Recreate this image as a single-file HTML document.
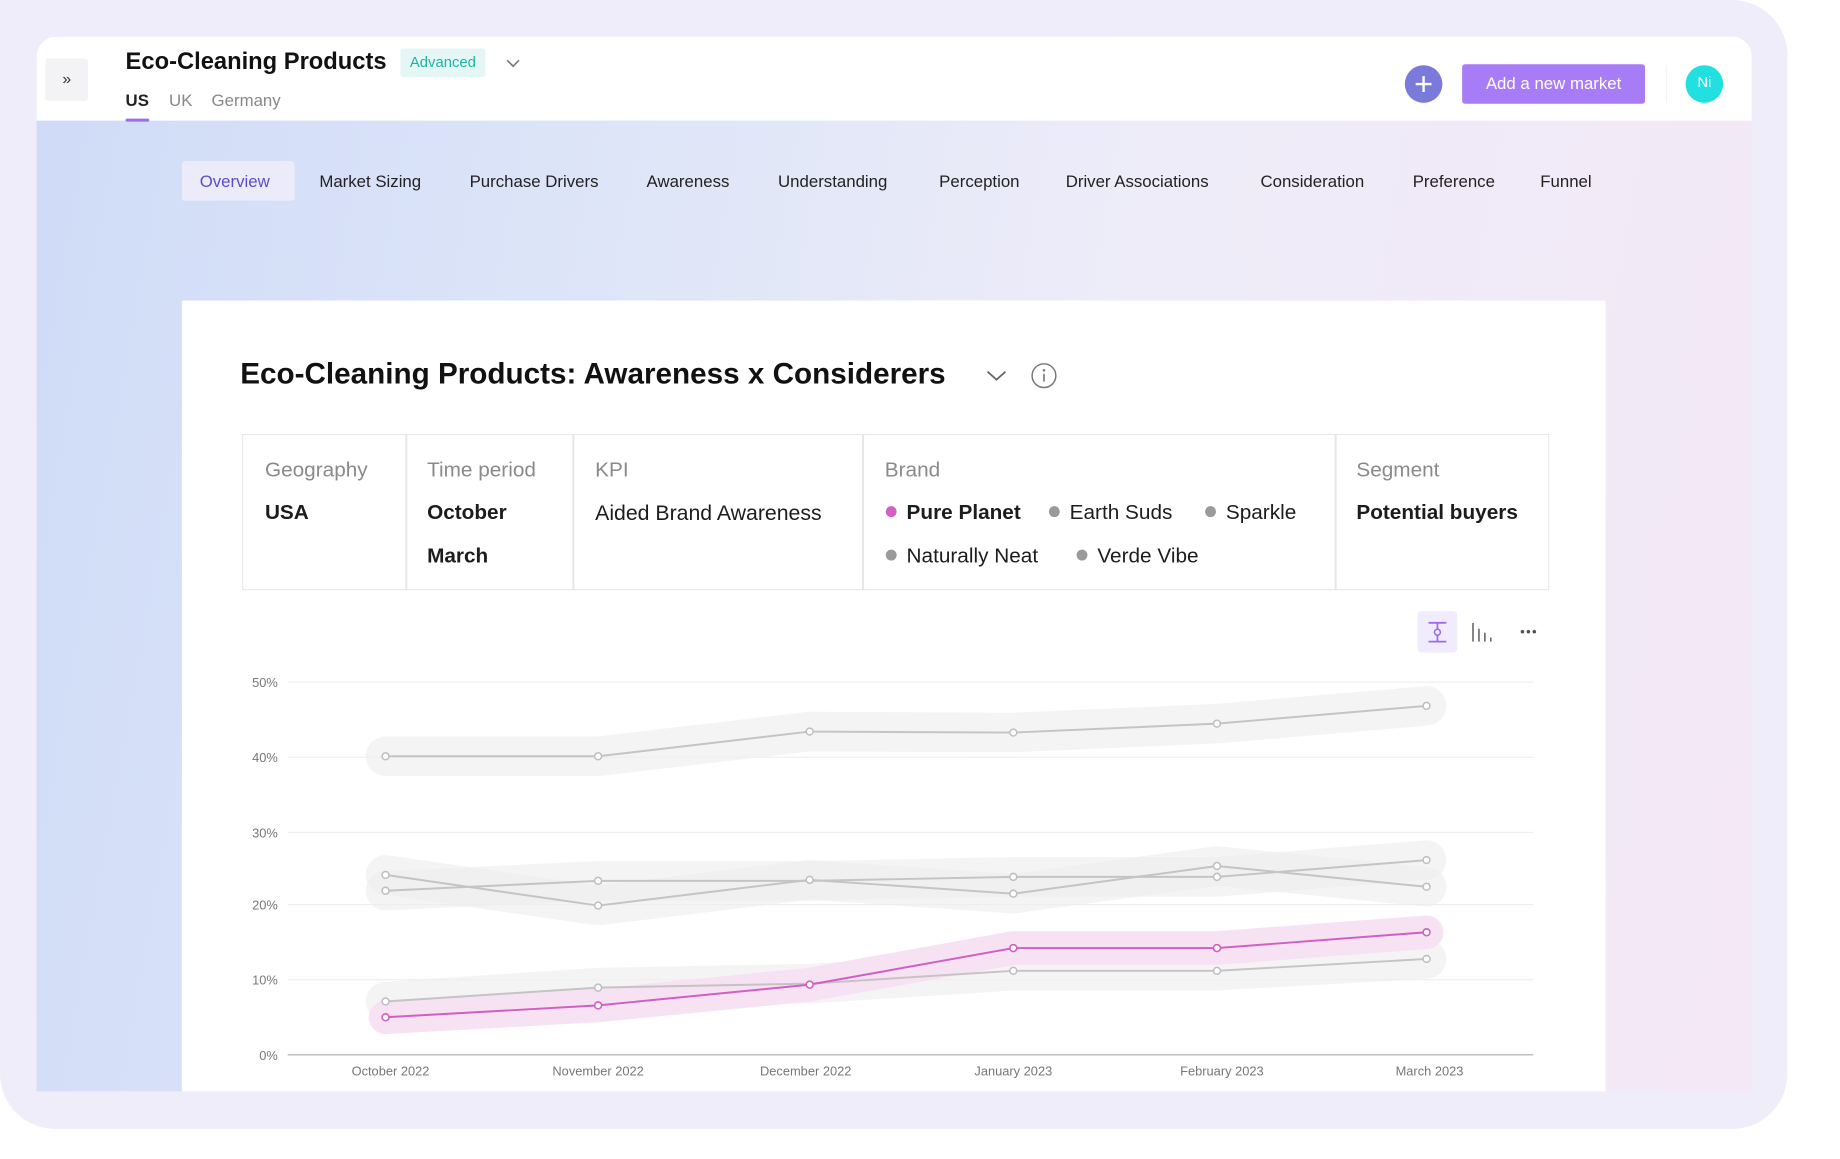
<!DOCTYPE html>
<html><head><meta charset="utf-8"><style>
*{margin:0;padding:0;box-sizing:border-box}
body{width:1840px;height:1158px;background:#fff;font-family:"Liberation Sans",sans-serif;position:relative;overflow:hidden;color:#1c1c1c}
#wrap{position:absolute;left:0;top:0;width:1862px;height:1172px;transform:scale(0.9886);transform-origin:0 0}
.abs{position:absolute}
#frame{left:0;top:0;width:1808px;height:1142px;background:#eeedf9;border-radius:0 56px 56px 56px}
#panel{left:37px;top:37px;width:1735px;height:1067px;border-radius:20px 20px 0 0;overflow:hidden;background:linear-gradient(100deg,#cfdbf7 0%,#dfe6f8 35%,#eeecf9 60%,#f4e8f6 100%)}
#hdr{left:0;top:0;width:1735px;height:85px;background:#fff}
.t{position:absolute;white-space:nowrap}
.nav{font-size:17px;color:#222;top:137px}
.lab{font-size:21px;color:#8a8a8a;top:464px}
.val{font-size:21px;color:#1c1c1c;top:507px}
.dot{display:inline-block;width:11px;height:11px;border-radius:50%;background:#9a9a9a;margin-right:10px;vertical-align:2px}
</style></head><body><div id="wrap">
<div id="frame" class="abs"></div>
<div id="panel" class="abs">
 <div id="hdr" class="abs"></div>
</div>
<div class="abs" style="left:46px;top:59px;width:43px;height:43px;background:#f3f3f5;border-radius:3px;font-size:16px;text-align:center;line-height:43px;color:#333">»</div>
<div class="t" style="left:127px;top:49px;font-size:24px;font-weight:bold;color:#111">Eco-Cleaning Products</div>
<div class="abs" style="left:405px;top:49px;width:86px;height:29px;background:#e5f7f5;border-radius:3px;color:#1db3a3;font-size:15px;text-align:center;line-height:29px">Advanced</div>
<svg class="abs" style="left:510px;top:57px" width="18" height="14"><path d="M3 4 L9 10 L15 4" fill="none" stroke="#777" stroke-width="1.6"/></svg>
<div class="t" style="left:127px;top:92px;font-size:17px;font-weight:bold;color:#222">US</div>
<div class="t" style="left:171px;top:92px;font-size:17px;color:#888">UK</div>
<div class="t" style="left:214px;top:92px;font-size:17px;color:#888">Germany</div>
<div class="abs" style="left:127px;top:120px;width:24px;height:3px;background:#9a6ee6;border-radius:2px"></div>
<div class="abs" style="left:1421px;top:66px;width:38px;height:38px;border-radius:50%;background:#7a7adb"></div>
<svg class="abs" style="left:1421px;top:66px" width="38" height="38"><path d="M19 11V27M11 19H27" stroke="#fff" stroke-width="2.4"/></svg>
<div class="abs" style="left:1479px;top:65px;width:185px;height:40px;background:#a77cf6;border-radius:3px;color:#fff;font-size:17px;text-align:center;line-height:40px">Add a new market</div>
<div class="abs" style="left:1685px;top:66px;width:1px;height:38px;background:#eee"></div>
<div class="abs" style="left:1705px;top:66px;width:38px;height:38px;border-radius:50%;background:#22dfe0;color:#fff;font-size:15px;text-align:center;line-height:36px">Ni</div>
<div class="abs" style="left:184px;top:163px;width:114px;height:40px;background:#ecebfa;border-radius:3px"></div>
<div class="t nav" style="left:202px;top:174px;color:#5a4ec6">Overview</div>
<div class="t nav" style="left:323px;top:174px">Market Sizing</div>
<div class="t nav" style="left:475px;top:174px">Purchase Drivers</div>
<div class="t nav" style="left:654px;top:174px">Awareness</div>
<div class="t nav" style="left:787px;top:174px">Understanding</div>
<div class="t nav" style="left:950px;top:174px">Perception</div>
<div class="t nav" style="left:1078px;top:174px">Driver Associations</div>
<div class="t nav" style="left:1275px;top:174px">Consideration</div>
<div class="t nav" style="left:1429px;top:174px">Preference</div>
<div class="t nav" style="left:1558px;top:174px">Funnel</div>
<div class="abs" style="left:184px;top:304px;width:1440px;height:800px;background:#fff"></div>
<div class="t" style="left:243px;top:362px;font-size:30px;font-weight:bold;color:#111">Eco-Cleaning Products: Awareness x Considerers</div>
<svg class="abs" style="left:996px;top:372px" width="24" height="16"><path d="M3 4 L12 12 L21 4" fill="none" stroke="#666" stroke-width="1.8"/></svg>
<svg class="abs" style="left:1042px;top:366px" width="28" height="28"><circle cx="14" cy="14" r="12" fill="none" stroke="#777" stroke-width="1.5"/><circle cx="14" cy="8.5" r="1.3" fill="#777"/><path d="M14 12V20" stroke="#777" stroke-width="1.6"/></svg>
<div class="abs" style="left:245px;top:439px;width:1322px;height:158px;border:1.5px solid #e6e6e6"></div>
<div class="abs" style="left:410px;top:439px;width:1.5px;height:158px;background:#e6e6e6"></div>
<div class="abs" style="left:579px;top:439px;width:1.5px;height:158px;background:#e6e6e6"></div>
<div class="abs" style="left:872px;top:439px;width:1.5px;height:158px;background:#e6e6e6"></div>
<div class="abs" style="left:1350px;top:439px;width:1.5px;height:158px;background:#e6e6e6"></div>
<div class="t lab" style="left:268px">Geography</div>
<div class="t lab" style="left:432px">Time period</div>
<div class="t lab" style="left:602px">KPI</div>
<div class="t lab" style="left:895px">Brand</div>
<div class="t lab" style="left:1372px">Segment</div>
<div class="t val" style="left:268px;font-weight:bold">USA</div>
<div class="t val" style="left:432px;font-weight:bold">October</div>
<div class="t val" style="left:432px;top:551px;font-weight:bold">March</div>
<div class="t val" style="left:602px;font-size:21.5px">Aided Brand Awareness</div>
<div class="t val" style="left:896px"><span class="dot" style="background:#d45fc3"></span><b>Pure Planet</b></div>
<div class="t val" style="left:1061px"><span class="dot"></span>Earth Suds</div>
<div class="t val" style="left:1219px"><span class="dot"></span>Sparkle</div>
<div class="t val" style="left:896px;top:551px"><span class="dot"></span>Naturally Neat</div>
<div class="t val" style="left:1089px;top:551px"><span class="dot"></span>Verde Vibe</div>
<div class="t val" style="left:1372px;font-weight:bold">Potential buyers</div>
<div class="abs" style="left:1434px;top:618px;width:40px;height:42px;background:#f1ecfd;border-radius:4px"></div>
<svg class="abs" style="left:1434px;top:618px" width="150" height="42">
<path d="M11 12H29M11 31H29M20 12V18M20 25V31" stroke="#9b6cf0" stroke-width="1.8"/><circle cx="20" cy="21.5" r="3" fill="none" stroke="#9b6cf0" stroke-width="1.6"/>
<path d="M56 12V31M62 18V31M68 22V31M74 27V31" stroke="#666" stroke-width="1.6"/>
<circle cx="106" cy="21" r="1.8" fill="#555"/><circle cx="112" cy="21" r="1.8" fill="#555"/><circle cx="118" cy="21" r="1.8" fill="#555"/>
</svg>
<svg class="abs" style="left:0;top:0" width="1840" height="1158" font-family="Liberation Sans, sans-serif">
<g stroke="#ececec" stroke-width="1"><path d="M291 690H1551M291 766H1551M291 842H1551M291 915H1551M291 991H1551"/></g>
<path d="M291 1067H1551" stroke="#aaa" stroke-width="1.2"/>
<g fill="#777" font-size="13" text-anchor="end"><text x="281" y="695">50%</text><text x="281" y="771">40%</text><text x="281" y="847">30%</text><text x="281" y="920">20%</text><text x="281" y="996">10%</text><text x="281" y="1072">0%</text></g>
<g fill="#777" font-size="13" text-anchor="middle"><text x="395" y="1088">October 2022</text><text x="605" y="1088">November 2022</text><text x="815" y="1088">December 2022</text><text x="1025" y="1088">January 2023</text><text x="1236" y="1088">February 2023</text><text x="1446" y="1088">March 2023</text></g>
<g fill="none" stroke-linecap="round" stroke-linejoin="round">
<g stroke="#eeeeee" stroke-opacity="0.65" stroke-width="40">
<path d="M390 765 L605 765 L819 740 L1025 741 L1231 732 L1443 714"/>
<path d="M390 885 L605 916 L819 890 L1025 904 L1231 876 L1443 897"/>
<path d="M390 901 L605 891 L819 891 L1025 887 L1231 887 L1443 870"/>
<path d="M390 1013 L605 999 L819 995 L1025 982 L1231 982 L1443 970"/>
</g>
<path d="M390 1029 L605 1017 L819 996 L1025 959 L1231 959 L1443 943" stroke="#f7e2f3" stroke-width="34"/>
<g stroke="#c4c4c4" stroke-width="2">
<path d="M390 765 L605 765 L819 740 L1025 741 L1231 732 L1443 714"/>
<path d="M390 885 L605 916 L819 890 L1025 904 L1231 876 L1443 897"/>
<path d="M390 901 L605 891 L819 891 L1025 887 L1231 887 L1443 870"/>
<path d="M390 1013 L605 999 L819 995 L1025 982 L1231 982 L1443 970"/>
</g>
<path d="M390 1029 L605 1017 L819 996 L1025 959 L1231 959 L1443 943" stroke="#cf5fc0" stroke-width="2"/>
</g>
<g fill="#fff" stroke="#bdbdbd" stroke-width="1.5">
<circle cx="390" cy="765" r="3.5"/><circle cx="605" cy="765" r="3.5"/><circle cx="819" cy="740" r="3.5"/><circle cx="1025" cy="741" r="3.5"/><circle cx="1231" cy="732" r="3.5"/><circle cx="1443" cy="714" r="3.5"/>
<circle cx="390" cy="885" r="3.5"/><circle cx="605" cy="916" r="3.5"/><circle cx="819" cy="890" r="3.5"/><circle cx="1025" cy="904" r="3.5"/><circle cx="1231" cy="876" r="3.5"/><circle cx="1443" cy="897" r="3.5"/>
<circle cx="390" cy="901" r="3.5"/><circle cx="605" cy="891" r="3.5"/><circle cx="1025" cy="887" r="3.5"/><circle cx="1231" cy="887" r="3.5"/><circle cx="1443" cy="870" r="3.5"/>
<circle cx="390" cy="1013" r="3.5"/><circle cx="605" cy="999" r="3.5"/><circle cx="1025" cy="982" r="3.5"/><circle cx="1231" cy="982" r="3.5"/><circle cx="1443" cy="970" r="3.5"/>
</g>
<g fill="#fff" stroke="#cf5fc0" stroke-width="1.6">
<circle cx="390" cy="1029" r="3.5"/><circle cx="605" cy="1017" r="3.5"/><circle cx="819" cy="996" r="3.5"/><circle cx="1025" cy="959" r="3.5"/><circle cx="1231" cy="959" r="3.5"/><circle cx="1443" cy="943" r="3.5"/>
</g>
</svg>
</div></body></html>
